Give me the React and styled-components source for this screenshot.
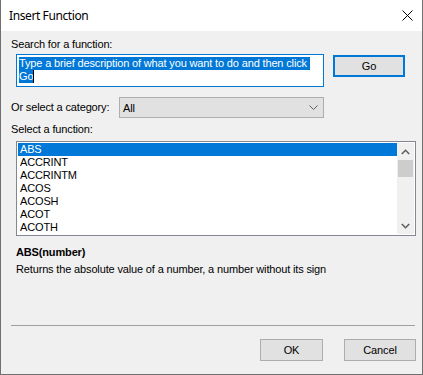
import React from 'react'
import styled, { createGlobalStyle } from 'styled-components'

const functions = ['ABS', 'ACCRINT', 'ACCRINTM', 'ACOS', 'ACOSH', 'ACOT', 'ACOTH']

const GlobalStyle = createGlobalStyle`
  body {
    margin: 0;
    background: #fff;
    font-family: "Liberation Sans", Arial, sans-serif;
    font-size: 11px;
    letter-spacing: -0.15px;
    color: #000;
  }
  * { box-sizing: border-box; }
`

export default function App() {
  return (
    <>
      <GlobalStyle />
      <Window>
        <TitleBar>
          <Title>Insert Function</Title>
          <svg width="11" height="11" viewBox="0 0 11 11">
            <path d="M0.5 0.5 L10.5 10.5 M10.5 0.5 L0.5 10.5" stroke="#000" strokeWidth="1" />
          </svg>
        </TitleBar>
        <Body>
          <Label>Search for a function:</Label>
          <SearchRow>
            <SearchBox>
              <Line><Highlight>Type a brief description of what you want to do and then click&nbsp;</Highlight></Line>
              <Line><Highlight>Go</Highlight><Caret /></Line>
            </SearchBox>
            <GoButton>Go</GoButton>
          </SearchRow>
          <CategoryRow>
            <Label width={108}>Or select a category:</Label>
            <Select>
              <span>All</span>
              <svg width="9" height="5" viewBox="0 0 9 5">
                <path d="M0.5 0.5 L4.5 4.5 L8.5 0.5" stroke="#606060" fill="none" strokeWidth="1" />
              </svg>
            </Select>
          </CategoryRow>
          <Label gap={5}>Select a function:</Label>
          <ListBox>
            <ListItems>
              {functions.map((name, i) => (
                <Item key={name} selected={i === 0}>{name}</Item>
              ))}
            </ListItems>
            <ScrollBar>
              <ArrowButton>
                <svg width="9" height="6" viewBox="0 0 9 6">
                  <path d="M0.8 5 L4.5 1.3 L8.2 5" stroke="#606060" fill="none" strokeWidth="1.6" />
                </svg>
              </ArrowButton>
              <Thumb />
              <Track />
              <ArrowButton>
                <svg width="9" height="6" viewBox="0 0 9 6">
                  <path d="M0.8 1 L4.5 4.7 L8.2 1" stroke="#606060" fill="none" strokeWidth="1.6" />
                </svg>
              </ArrowButton>
            </ScrollBar>
          </ListBox>
          <Signature>ABS(number)</Signature>
          <Description>Returns the absolute value of a number, a number without its sign</Description>
          <Footer>
            <Separator />
            <ButtonRow>
              <Button width={63}>OK</Button>
              <Button width={72}>Cancel</Button>
            </ButtonRow>
          </Footer>
        </Body>
      </Window>
    </>
  )
}

const Window = styled.div`
  width: 423px;
  height: 375px;
  border: 1px solid #707070;
  border-top: none;
  background: #f0f0f0;
  display: flex;
  flex-direction: column;
`

const TitleBar = styled.div`
  height: 31px;
  flex: none;
  background: #fff;
  display: flex;
  align-items: center;
  justify-content: space-between;
  padding: 0 9px 0 8px;
`

const Title = styled.span`
  font-family: "Segoe UI", "Noto Sans", sans-serif;
  font-size: 12px;
  letter-spacing: -0.4px;
  color: #000;
`

const Body = styled.div`
  flex: 1;
  display: flex;
  flex-direction: column;
  padding: 7px 6px 13px 10px;
`

const Label = styled.div`
  line-height: 13px;
  height: 13px;
  white-space: nowrap;
  margin-top: ${({ gap }) => gap || 0}px;
  ${({ width }) => width && `width: ${width}px; flex: none;`}
`

const SearchRow = styled.div`
  display: flex;
  align-items: flex-start;
  gap: 9px;
  margin-top: 3px;
  padding-left: 5px;
`

const SearchBox = styled.div`
  width: 308px;
  height: 33px;
  border: 1px solid #0078d7;
  background: #fff;
  padding: 2px;
  line-height: 13px;
`

const Line = styled.div`
  height: 13px;
  white-space: nowrap;
  display: flex;
  align-items: stretch;
`

const Highlight = styled.span`
  background: #0078d7;
  color: #fff;
`

const Caret = styled.span`
  width: 1px;
  background: #000;
`

const Button = styled.div`
  width: ${({ width }) => width}px;
  height: 22px;
  background: #e1e1e1;
  border: 1px solid #adadad;
  display: flex;
  align-items: center;
  justify-content: center;
`

const GoButton = styled(Button)`
  width: 72px;
  margin-top: 1px;
  border: 2px solid #0078d7;
`

const CategoryRow = styled.div`
  display: flex;
  align-items: center;
  margin-top: 10px;
`

const Select = styled.div`
  width: 205px;
  height: 21px;
  border: 1px solid #adadad;
  background: #e1e1e1;
  display: flex;
  align-items: center;
  justify-content: space-between;
  padding: 0 5px 0 3px;
`

const ListBox = styled.div`
  margin: 5px 0 0 5px;
  height: 95px;
  border: 1px solid #828790;
  background: #fff;
  display: flex;
`

const ListItems = styled.div`
  flex: 1;
  padding: 1px 0 1px 1px;
`

const Item = styled.div`
  height: 13px;
  line-height: 13px;
  padding-left: 2px;
  background: ${({ selected }) => (selected ? '#0078d7' : 'transparent')};
  color: ${({ selected }) => (selected ? '#fff' : '#000')};
`

const ScrollBar = styled.div`
  width: 17px;
  margin: 1px 1px 1px 0;
  background: #f0f0f0;
  display: flex;
  flex-direction: column;
  align-items: center;
`

const ArrowButton = styled.div`
  height: 17px;
  width: 17px;
  display: flex;
  align-items: center;
  justify-content: center;
`

const Thumb = styled.div`
  width: 15px;
  height: 17px;
  background: #cdcdcd;
`

const Track = styled.div`
  flex: 1;
`

const Signature = styled.div`
  margin: 10px 0 0 5px;
  line-height: 13px;
  font-weight: bold;
`

const Description = styled.div`
  margin: 4px 0 0 5px;
  line-height: 13px;
  white-space: nowrap;
`

const Footer = styled.div`
  margin-top: auto;
`

const Separator = styled.div`
  height: 1px;
  background: #a0a0a0;
  margin-right: 1px;
`

const ButtonRow = styled.div`
  display: flex;
  justify-content: flex-end;
  gap: 21px;
  margin-top: 13px;
`
